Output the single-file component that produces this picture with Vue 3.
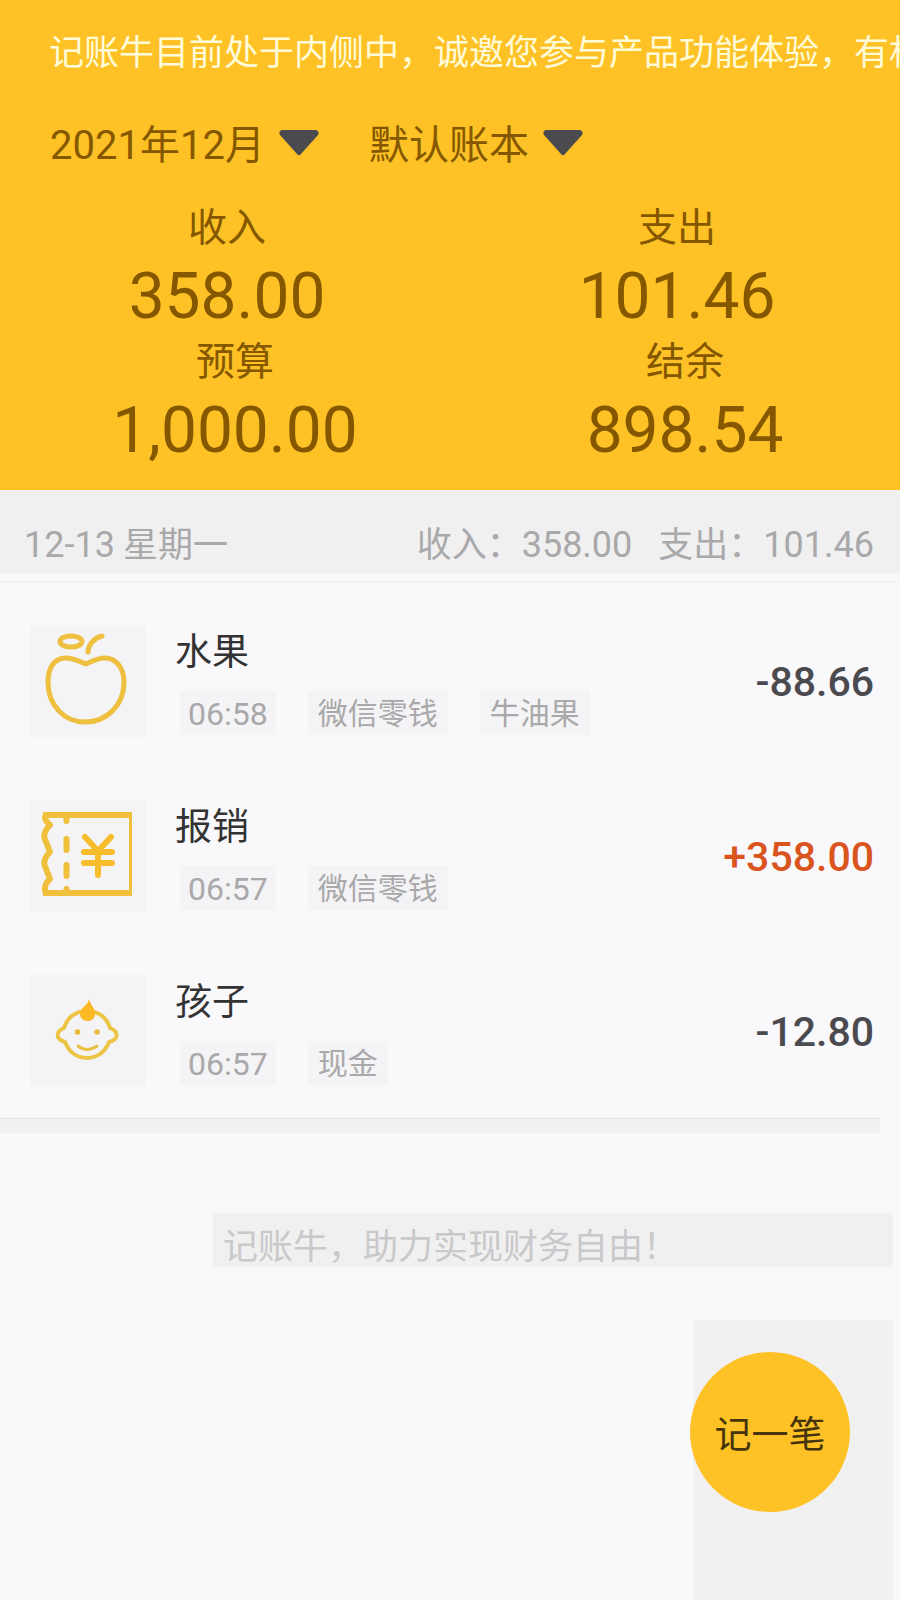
<script setup>
import { ref } from 'vue'

const month = ref('2021年12月')
const book = ref('默认账本')

const stats = [
  { label: '收入', value: '358.00' },
  { label: '支出', value: '101.46' },
  { label: '预算', value: '1,000.00' },
  { label: '结余', value: '898.54' },
]

const records = [
  { id: 1, icon: 'fruit', title: '水果', time: '06:58', tags: ['微信零钱', '牛油果'], amount: '-88.66', income: false },
  { id: 2, icon: 'ticket', title: '报销', time: '06:57', tags: ['微信零钱'], amount: '+358.00', income: true },
  { id: 3, icon: 'baby', title: '孩子', time: '06:57', tags: ['现金'], amount: '-12.80', income: false },
]
</script>

<template>
  <div class="page">
    <header class="top">
      <p class="notice">记账牛目前处于内侧中，诚邀您参与产品功能体验，有机</p>
      <div class="filters">
        <label class="picker">
          <select v-model="month" aria-label="月份">
            <option>2021年12月</option>
          </select>
          <svg class="caret" viewBox="0 0 40 26" aria-hidden="true">
            <path d="M3 0H37Q41 1 39 5L22 24Q20 26.500 18 24L1 5Q-1 1 3 0Z" />
          </svg>
        </label>
        <label class="picker">
          <select v-model="book" aria-label="账本">
            <option>默认账本</option>
          </select>
          <svg class="caret" viewBox="0 0 40 26" aria-hidden="true">
            <path d="M3 0H37Q41 1 39 5L22 24Q20 26.500 18 24L1 5Q-1 1 3 0Z" />
          </svg>
        </label>
      </div>
      <dl class="stats">
        <div v-for="s in stats" :key="s.label" class="stat">
          <dt>{{ s.label }}</dt>
          <dd>{{ s.value }}</dd>
        </div>
      </dl>
    </header>

    <main>
      <div class="day">
        <h2><span class="num">12-13</span><span>星期一</span></h2>
        <p class="totals">
          <span>收入：<span class="num">358.00</span></span>
          <span>支出：<span class="num">101.46</span></span>
        </p>
      </div>

      <ul class="records">
        <li v-for="r in records" :key="r.id" class="record">
          <div class="tile">
            <svg v-if="r.icon === 'fruit'" viewBox="0 0 116 112" aria-hidden="true">
              <g fill="none" stroke="#efc040" stroke-width="5" stroke-linecap="round" stroke-linejoin="round">
                <ellipse cx="41" cy="16.500" rx="11" ry="5.500" />
                <path d="M58 27C58 20 64 13 72 11" />
                <path d="M56 39C50 37 44 33 36 33C24 33 18 43 18 57C18 80 34 97 55 97C77 97 94 80 94 57C94 43 86 33 75 33C67 33 61 37 56 39Z" />
              </g>
            </svg>
            <svg v-else-if="r.icon === 'ticket'" viewBox="0 -1 116 112" aria-hidden="true">
              <g fill="#f0c03c">
                <rect x="13" y="11" width="89" height="6" />
                <rect x="13" y="89" width="89" height="6" />
                <rect x="99" y="11" width="3" height="84" />
              </g>
              <g fill="none" stroke="#f0c03c" stroke-width="6" stroke-linecap="round" stroke-linejoin="round">
                <path d="M15 16Q15 20 20 24Q13 31 14.500 37L20 51Q13 58 14.500 64L20 78Q14 83 15 90" />
                <path d="M36.500 17V20M36.500 38V49M36.500 64V75M36.500 88V90" />
              </g>
              <path d="M55 36L68 50L81 36M68 50V74M54 51H82M54 62H82" fill="none" stroke="#f8bd2c" stroke-width="6" stroke-linecap="round" stroke-linejoin="round" />
            </svg>
            <svg v-else viewBox="0 0 116 112" aria-hidden="true">
              <path d="M57 36C45 36 37 43 34 53C29 55 27 58 28 62C29 65 32 66 35 67C39 77 47 83 57 83C67 83 75 77 79 67C83 66 86 64 86.500 61C87 58 85 55 80 53C77 43 69 36 57 36Z" fill="none" stroke="#ecc545" stroke-width="4" stroke-linejoin="round" />
              <path d="M59 24C60 29 65 33 65 39C65 43.500 61.500 46 57.500 46C53 46 50 43 50 39C50 32 58 31 59 24Z" fill="#fdb825" />
              <circle cx="47.500" cy="57" r="2.800" fill="#e6bb3e" />
              <circle cx="67" cy="57" r="2.800" fill="#e6bb3e" />
              <path d="M48 71Q57 78 67 71" fill="none" stroke="#e9c044" stroke-width="3" stroke-linecap="round" />
            </svg>
          </div>
          <div class="info">
            <h3>{{ r.title }}</h3>
            <div class="tags">
              <time class="tag num">{{ r.time }}</time>
              <span v-for="t in r.tags" :key="t" class="tag">{{ t }}</span>
            </div>
          </div>
          <strong class="amount" :class="{ income: r.income }">{{ r.amount }}</strong>
        </li>
      </ul>
      <div class="rule"></div>
      <p class="slogan">记账牛，助力实现财务自由！</p>
    </main>

    <div class="dock">
      <button type="button" class="add">记一笔</button>
    </div>
  </div>
</template>

<style>
body {
  background: #f9f8fb;
}
</style>

<style scoped>
.page {
  min-height: 100vh;
  display: flex;
  flex-direction: column;
  overflow: hidden;
  background: #f9f8fb;
  color: #333;
  font-family: Roboto, "Noto Sans CJK SC", sans-serif;
}

p, h2, h3, ul, dl, dd {
  margin: 0;
  padding: 0;
  font-weight: 400;
}

.top {
  padding-bottom: 24px;
  background: #fec227;
  color: #855800;
}

.notice {
  padding: 4px 0 0 49px;
  overflow: hidden;
  color: #fffbd8;
  font-size: 35px;
  line-height: 100px;
  white-space: nowrap;
}

.filters {
  display: flex;
  gap: 50px;
  height: 78px;
  padding-left: 50px;
}

.picker {
  display: flex;
  align-items: center;
  gap: 14px;
}

select {
  appearance: none;
  padding: 6px 0 0;
  border: 0;
  background: none;
  color: inherit;
  font: inherit;
  font-size: 40px;
  line-height: 60px;
}

.caret {
  width: 40px;
  height: 26px;
  fill: #4b4a4f;
}

.stats {
  display: grid;
  grid-template-columns: 1fr 1fr;
  padding-top: 16px;
  text-align: center;
}

.stat {
  padding-left: 4px;
}

.stat:nth-child(n + 3) {
  padding-left: 20px;
}

.stat dt {
  font-size: 39px;
  line-height: 60px;
}

.stat dd {
  padding-top: 4px;
  font-size: 64px;
  line-height: 70px;
}

.day {
  display: flex;
  align-items: center;
  justify-content: space-between;
  height: 83px;
  margin-bottom: 8px;
  padding: 0 26px 0 24px;
  background: #f1f0f1;
  color: #a9a8aa;
}

.day h2,
.totals {
  padding-top: 28px;
  font-size: 35px;
  line-height: 54px;
}

.day h2 {
  display: flex;
  align-items: baseline;
  gap: 8px;
}

.day .num {
  font-size: 36px;
}

.totals {
  display: flex;
  gap: 26px;
}

.records {
  border-top: 1px solid #efeef1;
  padding-top: 11px;
  list-style: none;
}

.record {
  display: flex;
  align-items: center;
  height: 175px;
  padding: 0 26px 0 30px;
}

.tile {
  flex: none;
  width: 116px;
  height: 112px;
  margin-right: 29px;
  border-radius: 4px;
  background: #f4f3f5;
}

.tile svg {
  display: block;
  width: 100%;
  height: 100%;
}

.info {
  flex: 1;
}

.info h3 {
  font-size: 37px;
  line-height: 52px;
}

.tags {
  display: flex;
  gap: 32px;
  padding: 12px 0 0 5px;
}

.tag {
  padding: 2px 10px 0;
  background: #f4f3f5;
  color: #a9a8aa;
  font-size: 30px;
  line-height: 42px;
}

.tag.num {
  padding: 2px 8px 0;
  font-size: 32px;
}

.amount {
  padding-top: 2px;
  color: #4b4a4f;
  font-size: 41px;
  font-weight: 500;
}

.amount.income {
  color: #d9541e;
}

.rule {
  height: 14px;
  margin-right: 20px;
  border-top: 1px solid #e6e5e8;
  background: #f1f0f2;
}

.slogan {
  margin: 80px 7px 0 213px;
  padding: 16px 0 0 10px;
  background: #f1f0f1;
  color: #c9c8ca;
  font-size: 35px;
  line-height: 38px;
}

.dock {
  flex: 1;
  align-self: flex-end;
  margin: 53px 7px 0 0;
  padding: 32px 43px 80px 0;
  background: linear-gradient(90deg, transparent 3px, #f2f1f2 3px);
}

.add {
  width: 160px;
  height: 160px;
  padding: 0;
  border: 0;
  border-radius: 50%;
  background: #fec227;
  color: #46350c;
  font: inherit;
  font-size: 37px;
}
</style>
